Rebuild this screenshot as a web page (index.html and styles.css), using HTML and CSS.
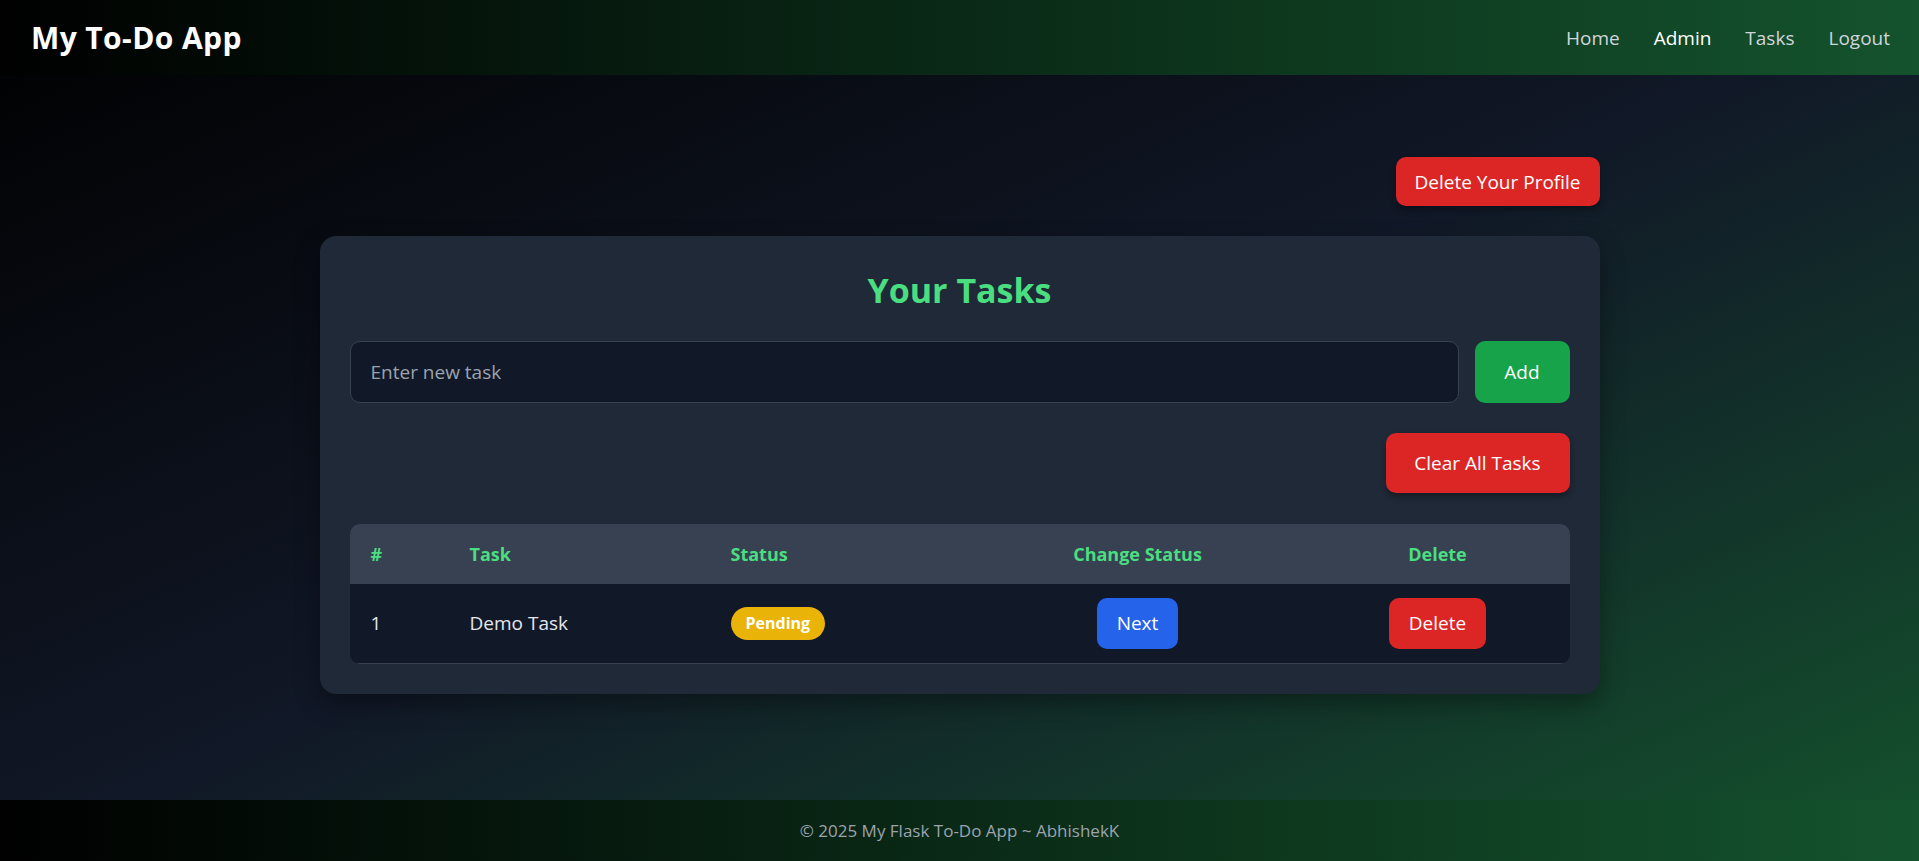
FILE: index.html
```html
<!DOCTYPE html>
<html lang="en">
<head>
<meta charset="utf-8">
<title>My To-Do App</title>
<link rel="stylesheet" href="styles.css">
</head>
<body>
<div class="page">
  <header class="navbar">
    <div class="brand">My To-Do App</div>
    <nav class="nav-links">
      <a class="nav-link" href="#">Home</a>
      <a class="nav-link nav-link-active" href="#">Admin</a>
      <a class="nav-link" href="#">Tasks</a>
      <a class="nav-link" href="#">Logout</a>
    </nav>
  </header>

  <main class="main">
    <div class="container">
      <div class="profile-row">
        <button class="btn btn-red btn-profile">Delete Your Profile</button>
      </div>
      <section class="card">
        <h1 class="card-title">Your Tasks</h1>
        <form class="add-form">
          <input class="task-input" type="text" placeholder="Enter new task">
          <button type="button" class="btn btn-green btn-add">Add</button>
        </form>
        <div class="clear-row">
          <button class="btn btn-red btn-clear">Clear All Tasks</button>
        </div>
        <div class="table-wrap">
          <table class="task-table">
            <colgroup>
              <col class="col-num">
              <col class="col-task">
              <col class="col-status">
              <col class="col-change">
              <col class="col-delete">
            </colgroup>
            <thead>
              <tr>
                <th>#</th>
                <th>Task</th>
                <th>Status</th>
                <th class="center">Change Status</th>
                <th class="center">Delete</th>
              </tr>
            </thead>
            <tbody>
              <tr>
                <td>1</td>
                <td>Demo Task</td>
                <td><span class="badge">Pending</span></td>
                <td class="center"><button class="btn btn-blue btn-small">Next</button></td>
                <td class="center"><button class="btn btn-red btn-small">Delete</button></td>
              </tr>
            </tbody>
          </table>
        </div>
      </section>
    </div>
  </main>

  <footer class="footer">© 2025 My Flask To-Do App ~ AbhishekK</footer>
</div>
</body>
</html>
```

FILE: styles.css
```css
* { box-sizing: border-box; }

html, body {
  margin: 0;
  padding: 0;
  height: 100%;
}

body {
  font-family: "Open Sans", "Noto Sans", "Liberation Sans", sans-serif;
  color: #f3f4f6;
  background: linear-gradient(to bottom right, #000000 0%, #111827 50%, #14532d 100%);
  overflow: hidden;
}

.page {
  min-height: 861px;
  display: flex;
  flex-direction: column;
}

.navbar {
  height: 75px;
  display: flex;
  align-items: center;
  justify-content: space-between;
  padding: 0 29px 0 31px;
  background: linear-gradient(to right, #000000, #14532d);
}

.brand {
  font-size: 30px;
  font-weight: 700;
  color: #ffffff;
  letter-spacing: 0.4px;
}

.nav-links {
  display: flex;
  gap: 34px;
}

.nav-link {
  font-size: 19px;
  color: #d1d5db;
  text-decoration: none;
}

.nav-link-active {
  color: #ffffff;
}

.main {
  flex: 1;
  padding-top: 82px;
}

.container {
  width: 1280px;
  margin: 0 auto;
}

.profile-row {
  display: flex;
  justify-content: flex-end;
  margin-bottom: 30px;
}

.btn {
  font-family: inherit;
  border: none;
  color: #ffffff;
  font-size: 19px;
  line-height: 30px;
  border-radius: 10px;
  cursor: pointer;
}

.btn-red { background: #dc2626; }
.btn-green { background: #16a34a; }
.btn-blue { background: #2563eb; }

.btn-profile {
  height: 49px;
  width: 204px;
  padding: 0;
  box-shadow: 0 4px 6px rgba(0,0,0,0.3);
}

.card {
  background: #1f2937;
  border-radius: 16px;
  padding: 30px;
  box-shadow: 0 10px 25px rgba(0,0,0,0.35);
}

.card-title {
  margin: 0 0 26px;
  text-align: center;
  font-size: 34px;
  line-height: 49px;
  font-weight: 700;
  color: #4ade80;
}

.add-form {
  display: flex;
  gap: 16px;
  margin: 0 0 30px;
}

.task-input {
  flex: 1;
  height: 62px;
  padding: 0 20px;
  background: #111827;
  border: 1px solid #374151;
  border-radius: 10px;
  font-family: inherit;
  font-size: 19px;
  color: #e5e7eb;
  outline: none;
}

.task-input::placeholder {
  color: #9ca3af;
}

.btn-add {
  width: 95px;
  height: 62px;
  padding: 0;
}

.clear-row {
  display: flex;
  justify-content: flex-end;
  margin-bottom: 31px;
}

.btn-clear {
  width: 184px;
  height: 60px;
  padding: 0;
  box-shadow: 0 4px 6px rgba(0,0,0,0.3);
}

.table-wrap {
  border-radius: 10px;
  overflow: hidden;
}

.task-table {
  width: 100%;
  border-collapse: collapse;
  table-layout: fixed;
}

.col-num { width: 99px; }
.col-task { width: 261px; }
.col-status { width: 260px; }
.col-change { width: 336px; }
.col-delete { width: 264px; }

.task-table th {
  background: #374151;
  color: #4ade80;
  font-size: 18px;
  font-weight: 700;
  text-align: left;
  height: 60px;
  padding: 0 21px;
}

.task-table td {
  background: #111827;
  color: #e5e7eb;
  font-size: 19px;
  height: 79px;
  padding: 0 21px;
  border-bottom: 1px solid #374151;
}

.task-table .center {
  text-align: center;
}

.badge {
  display: inline-block;
  background: #eab308;
  color: #ffffff;
  font-weight: 700;
  font-size: 16px;
  line-height: 33px;
  padding: 0 15px;
  border-radius: 999px;
}

.btn-small {
  height: 51px;
  padding: 0 20px;
}

.footer {
  height: 61px;
  display: flex;
  align-items: center;
  justify-content: center;
  background: linear-gradient(to right, #000000, #14532d);
  color: #9ca3af;
  font-size: 17px;
}
```
